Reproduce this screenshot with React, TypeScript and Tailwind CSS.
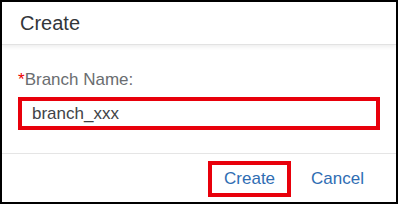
export default function App() {
  return (
    <div className="w-[398px] h-[204px] border-2 border-black bg-white flex flex-col font-['Liberation_Sans',Arial,sans-serif]">
      <header className="relative z-10 h-[43px] shrink-0 flex items-center px-[18px] border-b border-[#e2e2e2] shadow-[0_2px_4px_rgba(0,0,0,0.07)]">
        <h1 className="text-[20px] leading-none text-[#32363a]">Create</h1>
      </header>

      <div className="px-[16px] pt-[25px] pb-[23px] border-b border-[#e5e5e5]">
        <label className="block text-[17px] leading-[20px] text-[#6a6d70]">
          <span className="text-[#e00]">*</span>Branch Name:
        </label>
        <div className="mt-[7px] h-[33px] w-[362px] border-4 border-[#e8000b] flex items-center px-[10px]">
          <span className="text-[17px] leading-none text-[#3f4347]">branch_xxx</span>
        </div>
      </div>

      <footer className="flex-1 flex items-center justify-end gap-[4px] px-[16px] pt-[2px]">
        <button className="h-[36px] px-[12px] border-4 border-[#e8000b] text-[17px] text-[#2f6db3]">
          Create
        </button>
        <button className="h-[36px] px-[12px] border-4 border-transparent text-[17px] text-[#2f6db3]">
          Cancel
        </button>
      </footer>
    </div>
  );
}
